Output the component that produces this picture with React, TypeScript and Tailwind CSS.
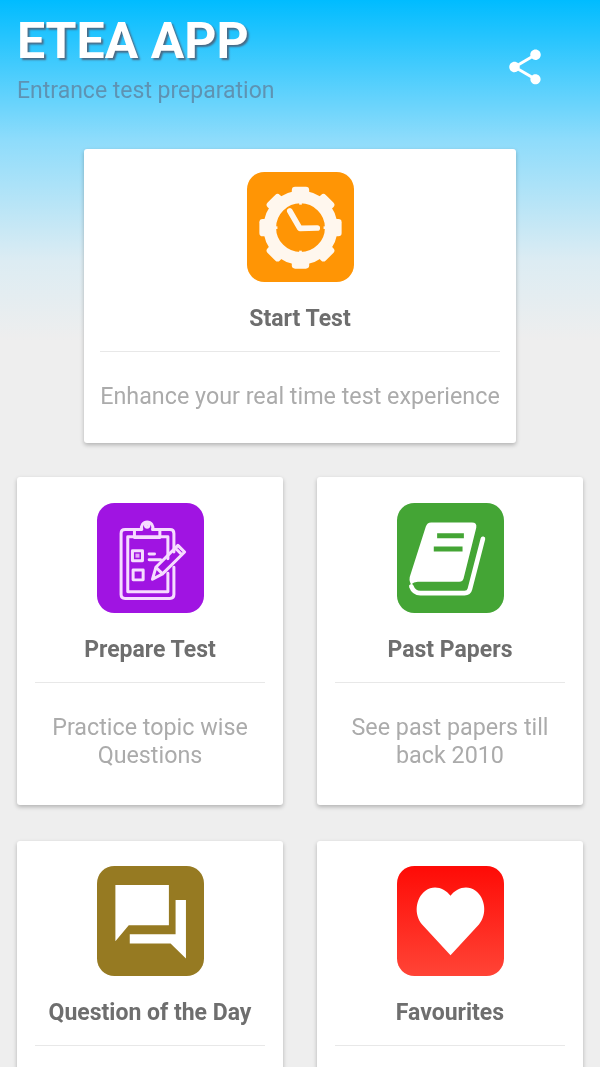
import React from "react";

const Box = ({ vb, children }: { vb: string; children: React.ReactNode }) => (
  <svg viewBox={vb} className="w-[107px] h-[110px] block shrink-0" preserveAspectRatio="none">
    {children}
  </svg>
);

const ClockIcon = () => (
  <Box vb="50 35 320 330">
    <rect x="50" y="35" width="320" height="330" rx="52" fill="#ff9505" />
    <circle cx="210" cy="202" r="92" fill="none" stroke="#fff7ee" strokeWidth="38" />
    {[0, 45, 90, 135, 180, 225, 270, 315].map((a) => (
      <rect key={a} x="184" y="79" width="52" height="26" rx="10" fill="#fff7ee" transform={`rotate(${a} 210 202)`} />
    ))}
    {[0, 90, 180, 270].map((a) => (
      <rect key={a} x="206" y="124" width="8" height="9" fill="#fff7ee" transform={`rotate(${a} 210 202)`} />
    ))}
    <path d="M178 152 L208 204 L260 203" fill="none" stroke="#fff7ee" strokeWidth="17" strokeLinecap="round" strokeLinejoin="round" />
  </Box>
);

const ClipboardIcon = () => (
  <Box vb="50 38 320 332">
    <rect x="50" y="38" width="320" height="332" rx="52" fill="#a014e2" />
    <g fill="none" stroke="#f6dcff" strokeWidth="9" strokeLinejoin="round" strokeLinecap="round">
      <path d="M162 118 H134 Q122 118 122 130 V314 Q122 326 134 326 H268 Q280 326 280 314 V232" />
      <path d="M280 186 V130 Q280 118 268 118 H238" />
      <path d="M262 250 V306 H142 V140 H262 V206" />
      <path d="M162 142 V118 H184 A17 17 0 1 1 216 118 H238 V142 Z" />
      <circle cx="200" cy="106" r="5" />
      <rect x="156" y="182" width="30" height="30" />
      <rect x="158" y="240" width="30" height="30" />
      <path d="M206 192 H222 M206 209 H240" />
      <path d="M216 268 L226 232 L292 166 L312 186 L246 252 Z M226 232 L246 252 M284 174 L304 194" />
    </g>
    <rect x="165" y="191" width="12" height="12" fill="#e5a5f8" />
  </Box>
);

const BookIcon = () => (
  <Box vb="50 38 320 332">
    <rect x="50" y="38" width="320" height="332" rx="52" fill="#44a535" />
    <path d="M152 97 H274 Q290 97 287 113 L250 262 Q248 276 236 276 H112 Q100 276 92 284 Q84 268 90 255 L136 110 Q140 97 152 97 Z" fill="#ffffff" />
    <path d="M170 137 H250 M160 177 H246" stroke="#44a535" strokeWidth="15" fill="none" />
    <path d="M307 146 L268 298 Q265 310 252 310 H120 Q100 310 93 290" stroke="#ffffff" strokeWidth="14" fill="none" strokeLinecap="round" />
  </Box>
);

const ChatIcon = () => (
  <Box vb="50 33 320 329">
    <rect x="50" y="33" width="320" height="329" rx="52" fill="#967a22" />
    <path d="M105 90 H265 V210 H145 L105 258 Z" fill="#ffffff" />
    <path d="M285 135 H316 V310 L270 265 H148 V237 H285 Z" fill="#ffffff" />
  </Box>
);

const HeartIcon = () => (
  <Box vb="50 33 320 329">
    <defs>
      <linearGradient id="hg" x1="0" y1="0" x2="0" y2="1">
        <stop offset="0" stopColor="#fe0b06" />
        <stop offset="1" stopColor="#ff4436" />
      </linearGradient>
    </defs>
    <rect x="50" y="33" width="320" height="329" rx="52" fill="url(#hg)" />
    <path d="M210 300 L125 208 C100 178 105 130 135 107 C160 88 192 98 210 122 C228 98 260 88 285 107 C315 130 320 178 295 208 Z" fill="#ffffff" />
  </Box>
);

const Card = ({
  icon,
  title,
  desc,
  className,
}: {
  icon: React.ReactNode;
  title: string;
  desc?: React.ReactNode;
  className: string;
}) => (
  <div className={`bg-white rounded-[3px] shadow-[0_2px_4px_rgba(0,0,0,0.25)] flex flex-col items-center ${className}`}>
    {icon}
    <div className="mt-[20px] h-[34px] text-[23px] leading-[34px] font-bold text-[#6e6e6e] whitespace-nowrap">{title}</div>
    <div className="self-stretch h-px bg-[#e8e8e8] mt-[15px]" />
    {desc && <div className="mt-[30px] text-[23.3px] leading-[28px] text-[#ababab] text-center whitespace-nowrap">{desc}</div>}
  </div>
);

export default function App() {
  return (
    <div
      className="w-[600px] h-[1067px] overflow-hidden bg-[linear-gradient(180deg,#00bcff_0px,#8edcfb_140px,#dcecf3_260px,#eeeeee_340px)] flex flex-col blur-[0.5px]"
      style={{ fontFamily: "Roboto, sans-serif" }}
    >
      <header className="flex justify-between h-[149px] shrink-0 pl-[17px] pr-[54px]">
        <div>
          <h1 className="mt-[13px] text-[50px] leading-[56px] font-bold text-white [text-shadow:2px_2px_2px_#4a6a85]">ETEA APP</h1>
          <p className="mt-[6px] text-[23px] leading-[32px] text-[#5e93b3]">Entrance test preparation</p>
        </div>
        <svg viewBox="0 0 24 24" className="w-[42px] h-[42px] mt-[46px] fill-white">
          <path d="M18 16.08c-.76 0-1.44.3-1.96.77L8.91 12.7c.05-.23.09-.46.09-.7s-.04-.47-.09-.7l7.05-4.11c.54.5 1.25.81 2.04.81 1.66 0 3-1.34 3-3s-1.34-3-3-3-3 1.34-3 3c0 .24.04.47.09.7L8.04 9.81C7.5 9.31 6.79 9 6 9c-1.66 0-3 1.34-3 3s1.34 3 3 3c.79 0 1.5-.31 2.04-.81l7.12 4.16c-.05.21-.08.43-.08.65 0 1.61 1.31 2.92 2.92 2.92 1.61 0 2.92-1.31 2.92-2.92s-1.31-2.92-2.92-2.92z" />
        </svg>
      </header>

      <div className="flex justify-center shrink-0">
        <Card
          className="w-[432px] h-[294px] pt-[23px] px-[16px]"
          icon={<ClockIcon />}
          title="Start Test"
          desc="Enhance your real time test experience"
        />
      </div>

      <div className="grid grid-cols-2 gap-x-[34px] gap-y-[36px] px-[17px] mt-[34px] shrink-0">
        <Card
          className="h-[328px] pt-[26px] px-[18px]"
          icon={<ClipboardIcon />}
          title="Prepare Test"
          desc={<>Practice topic wise<br />Questions</>}
        />
        <Card
          className="h-[328px] pt-[26px] px-[18px]"
          icon={<BookIcon />}
          title="Past Papers"
          desc={<>See past papers till<br />back 2010</>}
        />
        <Card className="h-[328px] pt-[25px] px-[18px]" icon={<ChatIcon />} title="Question of the Day" />
        <Card className="h-[328px] pt-[25px] px-[18px]" icon={<HeartIcon />} title="Favourites" />
      </div>
    </div>
  );
}
